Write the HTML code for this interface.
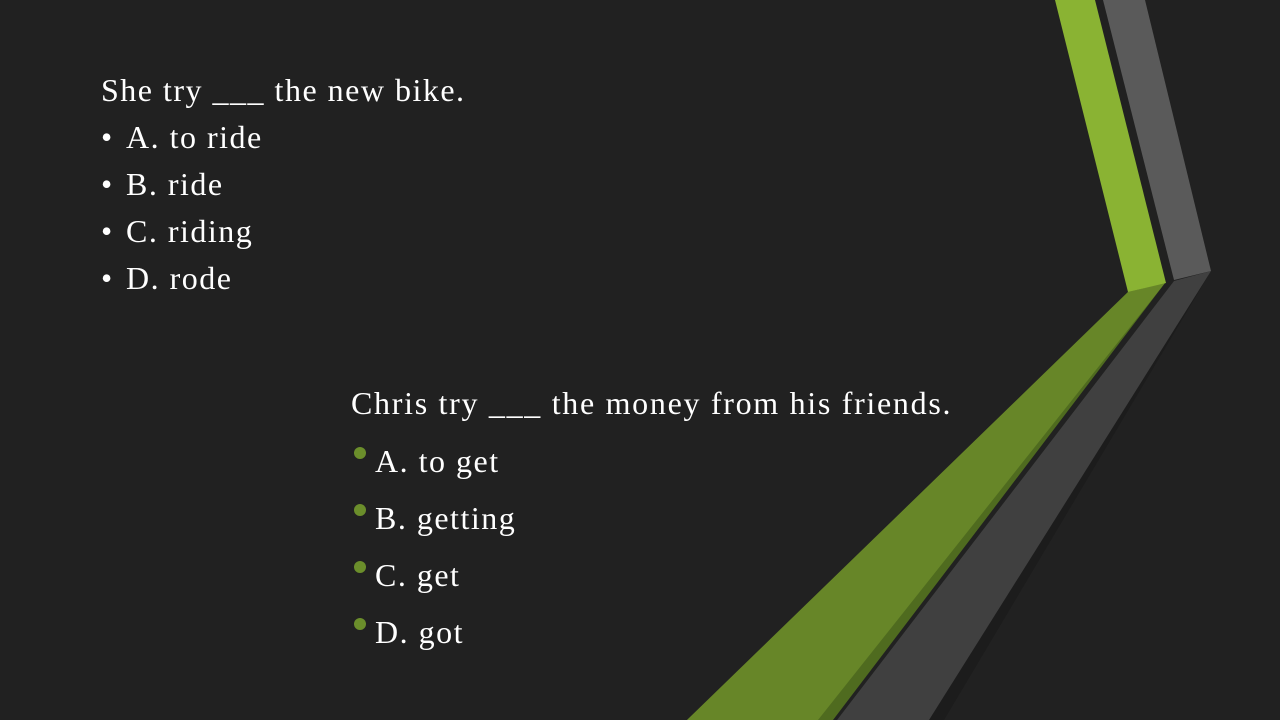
<!DOCTYPE html>
<html><head><meta charset="utf-8"><style>
html,body{margin:0;padding:0;}
body{width:1280px;height:720px;background:#212121;position:relative;overflow:hidden;font-family:"Liberation Serif",serif;color:#fff;}
.t{position:absolute;white-space:nowrap;font-size:32px;line-height:1;letter-spacing:1.5px;}
.d{position:absolute;width:12px;height:12px;border-radius:50%;background:#6b8e2b;}
svg{position:absolute;left:0;top:0;}
</style></head><body>
<svg width="1280" height="720" viewBox="0 0 1280 720">
<polygon points="1174,281 1211,271 944,720 837,720" fill="#1c1c1c"/>
<polygon points="1174,281 1211,271 929,720 837,720" fill="#404040"/>
<polygon points="1103,0 1145,0 1211,271 1174,280" fill="#5a5a5a"/>
<polygon points="1128,292 1165,283 833,720 687,720" fill="#4f6b1f"/>
<polygon points="1128,292 1165,283 818,720 687,720" fill="#678628"/>
<polygon points="1055,0 1095,0 1166,283 1128,292" fill="#8ab333"/>
</svg>
<div class="t" style="left:101px;top:74px">She try ___ the new bike.</div>
<div class="t" style="left:101px;top:121px">•</div><div class="t" style="left:126px;top:121px">A. to ride</div>
<div class="t" style="left:101px;top:168px">•</div><div class="t" style="left:126px;top:168px">B. ride</div>
<div class="t" style="left:101px;top:215px">•</div><div class="t" style="left:126px;top:215px">C. riding</div>
<div class="t" style="left:101px;top:262px">•</div><div class="t" style="left:126px;top:262px">D. rode</div>
<div class="t" style="left:351px;top:387px;letter-spacing:1.7px">Chris try ___ the money from his friends.</div>
<div class="d" style="left:354px;top:447px"></div>
<div class="t" style="left:375px;top:445px">A. to get</div>
<div class="d" style="left:354px;top:504px"></div>
<div class="t" style="left:375px;top:502px">B. getting</div>
<div class="d" style="left:354px;top:561px"></div>
<div class="t" style="left:375px;top:559px">C. get</div>
<div class="d" style="left:354px;top:618px"></div>
<div class="t" style="left:375px;top:616px">D. got</div>
</body></html>
